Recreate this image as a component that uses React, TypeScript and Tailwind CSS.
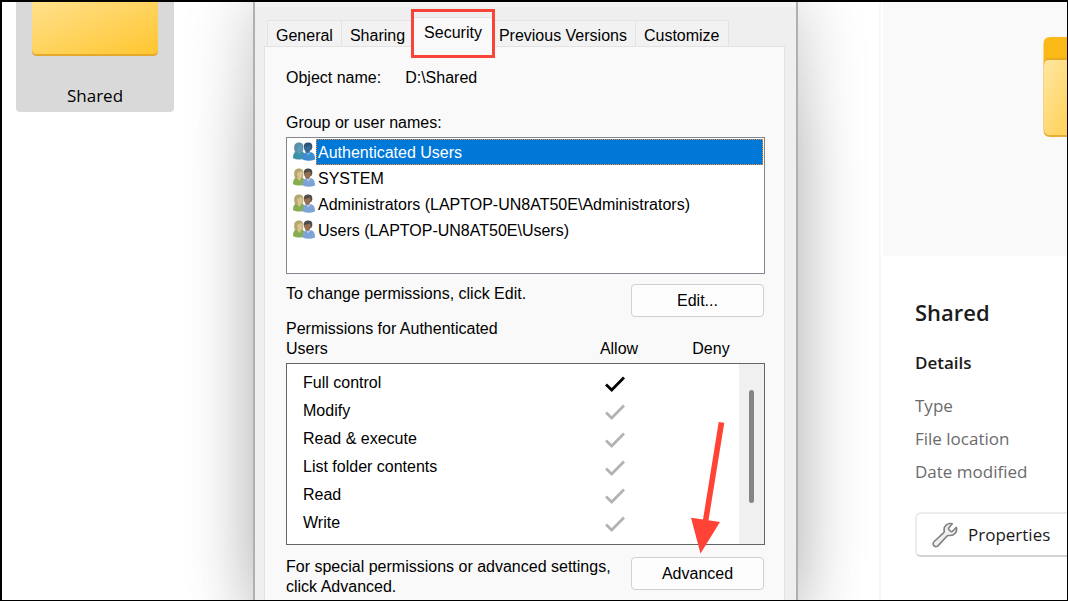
import React from "react";

const tabs = ["General", "Sharing", "Security", "Previous Versions", "Customize"];

const principals = [
  "Authenticated Users",
  "SYSTEM",
  "Administrators (LAPTOP-UN8AT50E\\Administrators)",
  "Users (LAPTOP-UN8AT50E\\Users)",
];

const permissions = [
  { name: "Full control", inherited: false },
  { name: "Modify", inherited: true },
  { name: "Read & execute", inherited: true },
  { name: "List folder contents", inherited: true },
  { name: "Read", inherited: true },
  { name: "Write", inherited: true },
];

function UsersIcon({ selected }: { selected: boolean }) {
  const c = selected
    ? { hair: "#5b8fa6", face: "#5c9cb8", top: "#3a93a8", hair2: "#2f5375", face2: "#3a6890", top2: "#3d8bd0", collar: "#6fb2e2" }
    : { hair: "#b3a86a", face: "#dcc294", top: "#86ad50", hair2: "#4f4b49", face2: "#937052", top2: "#7ea3d6", collar: "#b9d0ec" };
  return (
    <svg viewBox="0 0 22 19" className="-mt-px h-[19px] w-[22px] shrink-0" aria-hidden="true">
      <path d="M0 16.300c0-4 .8-5.800 3-6.800h6.500c2 1.300 2.500 3.500 2.500 7.300-4 1.300-8.500 1-12-.5z" fill={c.top} />
      <path d="M1.200 6C1 2 3.200.6 6 .6S10.600 2 10.300 6c-.1 2-.3 3.500-1.300 4.200H2.600C1.400 9.500 1.300 8 1.200 6z" fill={c.hair} />
      <path d="M4.200 4.800c2-.2 3-1 3.700-2 1.500.6 2 2.200 1.500 4.400-.4 1.800-1.200 2.800-2.200 2.800S4.500 8.800 4.200 7.300z" fill={c.face} />
      <path d="M4.500 9h3.300v2L6.500 13l-2-2.500z" fill={c.face} />
      <path d="M9.600 17.500c0-4 .6-6.100 3.400-7.300h5.500c2.600.9 3.500 3.200 3.500 7.200-4 1.700-8.500 1.700-12.400.1z" fill={c.top2} />
      <path d="M12.800 10.200l2.400 3.300 2.800-3.500z" fill={c.collar} />
      <path d="M10.800 5C10.600 1.900 12.500.6 15.300.6S19.600 2 19.300 5.300L18.300 8h-6.500z" fill={c.hair2} />
      <path d="M11.200 4.700c2 .2 4-.2 5.500-1.100.9.800 1.300 2 1 3.600-.4 2.200-1.600 3.800-3.100 3.800s-3.200-1.600-3.400-6.300z" fill={c.face2} />
    </svg>
  );
}

function Tick({ inherited }: { inherited: boolean }) {
  return (
    <svg
      viewBox="0 0 22 18"
      className="mx-auto block h-[18px] w-[22px]"
      fill="none"
      stroke={inherited ? "#b3b3b3" : "#000000"}
      strokeWidth="2.800"
      role="img"
      aria-label={inherited ? "Allowed, inherited" : "Allowed"}
    >
      <path d="M2 9.500l5.700 5.500L20 2.500" />
    </svg>
  );
}

function Wrench() {
  return (
    <svg viewBox="0 0 26 26" className="size-[26px] shrink-0" fill="#efefef" stroke="#808080" strokeWidth="1.600" strokeLinejoin="round" aria-hidden="true">
      <path d="M20.300 1.800c-4.300-1.400-8.900 1.800-8.100 7.100.1.900-.1 1.400-.7 2L2.200 19.500c-1.400 1.300-1.400 3.100-.1 4.300 1.300 1.200 3.100 1 4.300-.4l8.400-9.200c.6-.6 1.200-.8 2.200-.7 5.300.6 8.700-3.900 7.400-8.100l-3.900 3.900c-.6.600-1.300.6-1.900 0l-1.700-1.700c-.5-.6-.5-1.300 0-1.900z" />
    </svg>
  );
}

const dialogButton =
  "mr-px h-[33px] w-[133px] shrink-0 rounded border border-[#d0d0d0] bg-[#fdfdfd] text-center leading-5";

function PropertiesDialog() {
  return (
    <main className="flex min-w-0 flex-1 flex-col border-x-2 border-[#b0b0b0] bg-[#efefef] font-['Liberation_Sans',Arial,sans-serif] text-base leading-5 text-black shadow-[0_110px_64px_rgba(0,0,0,0.12),0_0_64px_rgba(0,0,0,0.24)]">
      <div className="h-[5px] bg-[#f4f4f4]" />
      <div role="tablist" className="flex items-end pt-[10px] pl-3">
        {tabs.map((tab) =>
          tab === "Security" ? (
            <div key={tab} className="relative z-10 -mr-1 -mb-px -ml-[3px]">
              <button role="tab" aria-selected="true" className="block h-[30px] border border-b-0 border-[#e3e3e3] bg-[#f9f9f9] px-3">
                {tab}
              </button>
              <div className="pointer-events-none absolute -top-2 right-0 -bottom-[11px] left-0 border-3 border-[#f9443a]" />
            </div>
          ) : (
            <button key={tab} role="tab" aria-selected="false" className="-ml-px h-[26px] border border-b-0 border-[#e3e3e3] bg-[#f2f2f2] px-2 pt-1 whitespace-nowrap first:ml-0">
              {tab}
            </button>
          ),
        )}
      </div>
      <section role="tabpanel" className="mr-[11px] ml-[9px] flex-1 border border-b-0 border-[#e3e3e3] bg-[#f9f9f9] pt-[21px] pr-[19px] pl-[21px]">
        <div className="flex gap-6">
          <span>Object name:</span>
          <span>D:\Shared</span>
        </div>
        <h2 className="mt-[25px]">Group or user names:</h2>
        <ul className="mt-1 h-[137px] border border-[#828790] bg-white p-px">
          {principals.map((name, i) => (
            <li key={name} className="flex h-[26px] items-center pl-[5px]">
              <UsersIcon selected={i === 0} />
              <span
                className={
                  i === 0
                    ? "ml-px flex h-full flex-1 items-center border border-dotted border-[#ff8728] bg-[#0078d7] pt-px pl-px text-white"
                    : "ml-[3px] pt-px"
                }
              >
                {name}
              </span>
            </li>
          ))}
        </ul>
        <div className="mt-[10px] flex h-[35px] items-start justify-between">
          <p>To change permissions, click Edit.</p>
          <button className={dialogButton}>Edit...</button>
        </div>
        <div className="flex items-end">
          <p className="mr-auto w-[240px]">Permissions for Authenticated Users</p>
          <span className="w-[92px] text-center">Allow</span>
          <span className="w-[92px] text-center">Deny</span>
          <span className="w-2" />
        </div>
        <div className="relative mt-1 flex h-[182px] border border-[#646464] bg-white">
          <div className="flex-1 pt-[5px] pl-4">
            <table className="w-full table-fixed border-collapse" aria-label="Permissions">
              <colgroup>
                <col />
                <col className="w-[92px]" />
                <col className="w-[78px]" />
              </colgroup>
              <tbody>
                {permissions.map((p) => (
                  <tr key={p.name} className="h-7">
                    <th scope="row" className="p-0 text-left font-normal">{p.name}</th>
                    <td className="p-0 pt-[2px]">
                      <Tick inherited={p.inherited} />
                    </td>
                    <td className="p-0" />
                  </tr>
                ))}
              </tbody>
            </table>
          </div>
          <div className="w-[25px] bg-[#f0f0f0] pt-[26px] pl-[10px]">
            <div className="h-[113px] w-[5px] rounded-full bg-[#858585]" />
          </div>
          <svg viewBox="0 0 36 134" className="pointer-events-none absolute top-[57px] right-[39px] z-10 h-[134px] w-9" fill="#ff4336" aria-hidden="true">
            <path d="M29.700 1l5.600.8L19.500 99.300 31 101 11.500 132.500 2 96.700l12 1.800z" />
          </svg>
        </div>
        <div className="mt-3 flex items-start justify-between">
          <p className="w-[336px]">For special permissions or advanced settings, click Advanced.</p>
          <button className={dialogButton}>Advanced</button>
        </div>
      </section>
    </main>
  );
}

export default function App() {
  return (
    <div className="flex min-h-screen overflow-hidden border-t-2 border-r border-b border-l-2 border-black bg-white font-['Open_Sans','Noto_Sans',sans-serif]">
      <div className="w-[251px] shrink-0 pl-[14px]">
        <figure className="flex h-[110px] w-[158px] flex-col items-center rounded-b-sm bg-[#d9d9d9]">
          <svg viewBox="0 0 128 54" className="h-[54px] w-32 shrink-0" aria-hidden="true">
            <defs>
              <linearGradient id="folderLarge" x1="0" y1="0" x2="1" y2="1">
                <stop offset="0" stopColor="#ffe08c" />
                <stop offset="1" stopColor="#ffc62f" />
              </linearGradient>
            </defs>
            <path d="M1 0h126v49q0 5-5 5H6q-5 0-5-5z" fill="#e3a82c" />
            <path d="M1 0h126v47q0 5-5 5H6q-5 0-5-5z" fill="url(#folderLarge)" />
          </svg>
          <figcaption className="mt-7 text-[17px] leading-6 text-black">Shared</figcaption>
        </figure>
      </div>
      <PropertiesDialog />
      <aside className="z-10 ml-[81px] w-[188px] shrink-0 border-l-2 border-[#f7f7f7] bg-white pl-[2px] text-[17px] text-[#1b1b1b]">
        <div className="flex h-[254px] justify-end bg-[#f9f9f9] pt-[35px]">
          <svg viewBox="0 0 24 100" className="h-[100px] w-6" aria-hidden="true">
            <defs>
              <linearGradient id="folderPreview" x1="0" y1="0" x2="0.6" y2="1">
                <stop offset="0" stopColor="#ffe7a1" />
                <stop offset="1" stopColor="#ffd463" />
              </linearGradient>
            </defs>
            <path d="M24 0H7Q.5 0 .5 7v21H24z" fill="#fbb917" />
            <path d="M.5 28h1l4-5H24v-2H4Q.5 23 .5 28z" fill="#e5aa22" />
            <path d="M24 24v76H7q-6.500 0-6.500-7V28z" fill="#e5ae35" />
            <path d="M24 23H6q-5 0-5 5v64q0 6 6 6h17z" fill="url(#folderPreview)" />
          </svg>
        </div>
        <div className="pl-8">
          <h1 className="mt-10 text-[22px] leading-8 font-semibold">Shared</h1>
          <h2 className="mt-[23px] leading-6 font-semibold">Details</h2>
          <dl className="mt-[14px] leading-[33px] text-[#6b6b6b]">
            <dt>Type</dt>
            <dt>File location</dt>
            <dt>Date modified</dt>
          </dl>
          <button className="mt-6 flex h-[45px] w-full items-center gap-[10px] rounded-l-md border-2 border-r-0 border-[#ececec] border-b-[#d3d3d3] bg-white pl-[15px]">
            <Wrench />
            Properties
          </button>
        </div>
      </aside>
    </div>
  );
}
